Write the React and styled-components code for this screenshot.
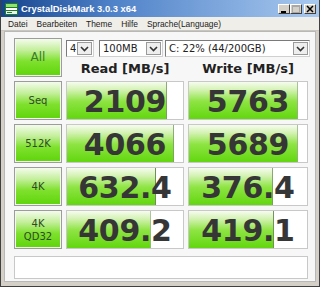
import React from 'react'
import styled, { createGlobalStyle } from 'styled-components'

const GlobalStyle = createGlobalStyle`
  * { box-sizing: border-box; }
  body {
    margin: 0;
    background: #6b6b6b;
    font-family: "Liberation Sans", Arial, sans-serif;
  }
`

const rows = [
  { label: ['Seq'], read: '2109', readPct: 86, write: '5763', writePct: 92 },
  { label: ['512K'], read: '4066', readPct: 92, write: '5689', writePct: 92 },
  { label: ['4K'], read: '632.4', readPct: 77, write: '376.4', writePct: 71 },
  { label: ['4K', 'QD32'], read: '409.2', readPct: 72, write: '419.1', writePct: 72 },
]

export default function App() {
  return (
    <>
      <GlobalStyle />
      <Window>
        <TitleBar>
          <AppIcon width="13" height="12" viewBox="0 0 13 12">
            <rect x="0" y="0" width="13" height="12" fill="#1f7a2a" />
            <rect x="1" y="1" width="11" height="3" fill="#8fe36a" />
            <rect x="1" y="5" width="11" height="2" fill="#ffffff" />
            <rect x="1" y="8" width="11" height="3" fill="#e9f5e9" />
            <rect x="2" y="9" width="5" height="1" fill="#1f7a2a" />
          </AppIcon>
          <Title>CrystalDiskMark 3.0.3 x64</Title>
          <Controls>
            <CtrlBtn>
              <svg width="8" height="8" viewBox="0 0 8 8"><rect x="1" y="6" width="5" height="2" fill="#000" /></svg>
            </CtrlBtn>
            <CtrlBtn>
              <svg width="8" height="8" viewBox="0 0 8 8"><rect x="0.5" y="0.5" width="7" height="7" fill="none" stroke="#a8a8a8" /><rect x="0.5" y="0.5" width="7" height="1.5" fill="#a8a8a8" /></svg>
            </CtrlBtn>
            <CtrlBtn $gap>
              <svg width="8" height="8" viewBox="0 0 8 8"><path d="M1 1 L7 7 M7 1 L1 7" stroke="#000" strokeWidth="1.5" /></svg>
            </CtrlBtn>
          </Controls>
        </TitleBar>
        <MenuBar>
          <MenuItem>Datei</MenuItem>
          <MenuItem>Bearbeiten</MenuItem>
          <MenuItem>Theme</MenuItem>
          <MenuItem>Hilfe</MenuItem>
          <MenuItem>Sprache(Language)</MenuItem>
        </MenuBar>
        <Client>
          <Grid>
            <TestButton $big>All</TestButton>
            <TopArea>
              <Combos>
                <Combo $w={28}><span>4</span><DropBtn><Chevron /></DropBtn></Combo>
                <Combo $w={64}><span>100MB</span><DropBtn><Chevron /></DropBtn></Combo>
                <Combo $w={145}><span>C: 22% (44/200GB)</span><DropBtn><Chevron /></DropBtn></Combo>
              </Combos>
              <Headers>
                <Header>Read [MB/s]</Header>
                <Header>Write [MB/s]</Header>
              </Headers>
            </TopArea>
            {rows.map((r) => (
              <React.Fragment key={r.label.join('')}>
                <TestButton>
                  {r.label.map((l) => <span key={l}>{l}</span>)}
                </TestButton>
                <Cell $pct={r.readPct}>{r.read}</Cell>
                <Cell $pct={r.writePct}>{r.write}</Cell>
              </React.Fragment>
            ))}
          </Grid>
          <StatusBox />
        </Client>
      </Window>
    </>
  )
}

function Chevron() {
  return (
    <svg width="9" height="6" viewBox="0 0 9 6">
      <path d="M1 1 L4.5 4.5 L8 1" fill="none" stroke="#333" strokeWidth="1.6" />
    </svg>
  )
}

const Window = styled.div`
  width: 320px;
  height: 287px;
  display: flex;
  flex-direction: column;
  background: #d4d0c8;
  border: 1px solid #404040;
  border-top: none;
  padding: 0 3px 4px 3px;
  overflow: hidden;
`

const TitleBar = styled.div`
  display: flex;
  align-items: center;
  height: 17px;
  margin: 0 -3px;
  padding: 0 3px 0 4px;
  background: linear-gradient(to right, #16448e 0%, #4f82c8 35%, #a9c9ef 100%);
  gap: 3px;
`

const AppIcon = styled.svg`
  flex: none;
`

const Title = styled.div`
  flex: 1;
  color: #fff;
  font-weight: bold;
  font-size: 9.4px;
`

const Controls = styled.div`
  display: flex;
  align-items: center;
`

const CtrlBtn = styled.div`
  width: 12px;
  height: 10px;
  display: flex;
  align-items: center;
  justify-content: center;
  background: #d4d0c8;
  border: 1px solid;
  border-color: #fff #404040 #404040 #fff;
  margin-left: ${(p) => (p.$gap ? '2px' : '0')};
`

const MenuBar = styled.div`
  display: flex;
  align-items: center;
  height: 14px;
  background: #efeee8;
  margin: 0 -3px;
  padding: 0 7px;
  gap: 9px;
  border-bottom: 1px solid #c8c6bd;
`

const MenuItem = styled.span`
  font-size: 8.4px;
  color: #222;
`

const Client = styled.div`
  flex: 1;
  background: #f7f7f7;
  border: 1px solid #b8b8b8;
  padding: 6px 9px 0 9px;
  display: flex;
  flex-direction: column;
`

const Grid = styled.div`
  display: grid;
  grid-template-columns: 48px 118px 120px;
  grid-auto-rows: 39px;
  column-gap: 4px;
  row-gap: 4px;
`

const TestButton = styled.div`
  display: flex;
  flex-direction: column;
  align-items: center;
  justify-content: center;
  border: 1px solid #9c9c9c;
  box-shadow: inset 0 0 0 1px #f2fbe9;
  background: linear-gradient(to bottom, #f4fcec 0%, #c4ef9c 30%, #7fe12e 60%, #5ed40a 100%);
  color: ${(p) => (p.$big ? '#3d7a2c' : '#2f4a25')};
  font-family: "DejaVu Sans", Verdana, sans-serif;
  font-size: ${(p) => (p.$big ? '12px' : '10px')};
  line-height: 13px;
`

const TopArea = styled.div`
  grid-column: 2 / 4;
  display: flex;
  flex-direction: column;
  justify-content: space-between;
  padding-top: 2px;
`

const Combos = styled.div`
  display: flex;
  gap: 6px;
`

const Combo = styled.div`
  width: ${(p) => p.$w}px;
  flex: none;
  height: 17px;
  display: flex;
  align-items: stretch;
  background: #fff;
  border: 1px solid;
  border-color: #7a7a7a #d0d0d0 #d0d0d0 #7a7a7a;
  font-family: "DejaVu Sans", Verdana, sans-serif;
  font-size: 10px;
  color: #222;
  span {
    flex: 1;
    padding-left: 3px;
    line-height: 15px;
    white-space: nowrap;
    overflow: hidden;
  }
  &:first-child { margin-right: -1px; }
  &:last-child { margin-left: -4px; }
`

const DropBtn = styled.div`
  width: 15px;
  flex: none;
  display: flex;
  align-items: center;
  justify-content: center;
  background: #eeeeee;
  border: 1px solid #9a9a9a;
  margin: 1px;
`

const Headers = styled.div`
  display: grid;
  grid-template-columns: 118px 120px;
  column-gap: 4px;
`

const Header = styled.div`
  text-align: center;
  font-family: "DejaVu Sans", Verdana, sans-serif;
  font-weight: bold;
  font-size: 13px;
  color: #222;
  line-height: 16px;
`

const Cell = styled.div`
  display: flex;
  align-items: center;
  justify-content: center;
  border: 1px solid #c8c8c8;
  background-color: #fff;
  background-image:
    linear-gradient(to left, #6f8f58 1px, transparent 1px),
    linear-gradient(to bottom, #f6fcef 0%, #d2f2b0 22%, #8ee443 52%, #62d70e 100%);
  background-size: ${(p) => p.$pct}% 100%, ${(p) => p.$pct}% 100%;
  background-repeat: no-repeat;
  font-family: "DejaVu Sans", Verdana, sans-serif;
  font-weight: bold;
  font-size: 30px;
  color: #363636;
  letter-spacing: -0.3px;
  padding-top: 2px;
`

const StatusBox = styled.div`
  margin-top: 7px;
  height: 23px;
  width: 294px;
  background: #fff;
  border: 1px solid #c8c8c8;
`
